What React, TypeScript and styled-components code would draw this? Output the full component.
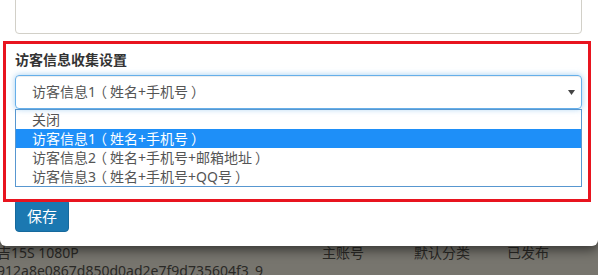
import React from "react";
import styled, { createGlobalStyle } from "styled-components";

const Global = createGlobalStyle`
  html, body { margin: 0; padding: 0; }
  body {
    width: 598px;
    height: 275px;
    overflow: hidden;
    background: #77756e;
    font-family: "Noto Sans", "Noto Sans CJK SC", sans-serif;
  }
`;

const Page = styled.div`
  width: 598px;
  height: 275px;
  display: flex;
  flex-direction: column;
  overflow: hidden;
`;

const Panel = styled.div`
  position: relative;
  z-index: 2;
  height: 246px;
  flex-shrink: 0;
  background: #fff;
  border-radius: 0 0 6px 6px;
  box-shadow: 0 4px 12px rgba(0, 0, 0, 0.55);
  display: flex;
  flex-direction: column;
  padding: 0 16px 0 15px;
  box-sizing: border-box;
`;

const TopInput = styled.div`
  margin-top: -6px;
  height: 40px;
  flex-shrink: 0;
  border: 1px solid #d2d0c8;
  border-radius: 4px;
  box-sizing: border-box;
`;

const FormGroup = styled.div`
  position: relative;
  margin-top: 16px;
  display: flex;
  flex-direction: column;
`;

const Annotation = styled.div`
  position: absolute;
  left: -12px;
  right: -9px;
  top: -9px;
  bottom: -15px;
  border: 3px solid #e8141f;
  pointer-events: none;
  z-index: 3;
`;

const Label = styled.label`
  font-size: 14px;
  font-weight: bold;
  color: #333;
  line-height: 20px;
  height: 20px;
  margin-bottom: 5px;
`;

const Select = styled.div`
  height: 34px;
  border: 1px solid #66afe9;
  border-radius: 4px;
  box-shadow: inset 0 1px 1px rgba(0, 0, 0, 0.075), 0 0 6px rgba(102, 175, 233, 0.6);
  box-sizing: border-box;
  display: flex;
  align-items: center;
  justify-content: space-between;
  padding: 0 6px 0 16px;
  font-size: 14px;
  color: #555;
  line-height: 20px;
`;

/* fullwidth brackets, glyph nudged to the middle of its em box as in the reference font */
const Paren = styled.span<{ $close?: boolean }>`
  display: inline-block;
  transform: translateX(${(p) => (p.$close ? "3px" : "-3px")});
`;

const Arrow = styled.svg`
  width: 7px;
  height: 5px;
  margin-top: 1px;
`;

const List = styled.ul`
  list-style: none;
  margin: 0;
  padding: 0;
  border: 1px solid #5897d0;
  display: flex;
  flex-direction: column;
`;

const Item = styled.li<{ $active?: boolean }>`
  height: 19px;
  line-height: 19px;
  padding-left: 16px;
  font-size: 14px;
  color: ${(p) => (p.$active ? "#fff" : "#555")};
  background: ${(p) => (p.$active ? "#1e8ff8" : "transparent")};
  white-space: nowrap;
`;

const Button = styled.button`
  margin-top: 12px;
  align-self: flex-start;
  flex-shrink: 0;
  width: 54px;
  height: 33px;
  border: 1px solid #16699c;
  border-radius: 4px;
  background: #1b78b1;
  color: #fff;
  font-family: "Noto Sans", "Noto Sans CJK SC", sans-serif;
  font-size: 15px;
  line-height: 20px;
  padding: 0;
`;

const Rows = styled.div`
  position: relative;
  z-index: 1;
  margin-top: -2px;
  display: flex;
  flex-direction: column;
  color: #2a2926;
  font-size: 14px;
`;

const Row = styled.div`
  display: grid;
  grid-template-columns: 325px 92px 93px 1fr;
  height: 18px;
  line-height: 18px;
  white-space: nowrap;
  margin-left: -3px;
`;

const Cell = styled.span`
  overflow: visible;
`;

const Option = ({ head, body }: { head: string; body: string }) => (
  <>
    {head}
    <Paren>（</Paren>
    {body}
    <Paren $close>）</Paren>
  </>
);

export default function App() {
  const options: { head: string; body?: string }[] = [
    { head: "关闭" },
    { head: "访客信息1", body: "姓名+手机号" },
    { head: "访客信息2", body: "姓名+手机号+邮箱地址" },
    { head: "访客信息3", body: "姓名+手机号+QQ号" },
  ];
  return (
    <Page>
      <Global />
      <Panel>
        <TopInput />
        <FormGroup>
          <Annotation />
          <Label>访客信息收集设置</Label>
          <Select>
            <span>
              <Option head="访客信息1" body="姓名+手机号" />
            </span>
            <Arrow viewBox="0 0 7 5">
              <path d="M0 0 H7 L3.5 5 Z" fill="#444" />
            </Arrow>
          </Select>
          <List>
            {options.map((o, i) => (
              <Item key={o.head} $active={i === 1}>
                {o.body ? <Option head={o.head} body={o.body} /> : o.head}
              </Item>
            ))}
          </List>
        </FormGroup>
        <Button>保存</Button>
      </Panel>
      <Rows>
        <Row>
          <Cell>吉15S 1080P</Cell>
          <Cell>主账号</Cell>
          <Cell>默认分类</Cell>
          <Cell>已发布</Cell>
        </Row>
        <Row>
          <Cell>912a8e0867d850d0ad2e7f9d735604f3_9</Cell>
        </Row>
      </Rows>
    </Page>
  );
}
